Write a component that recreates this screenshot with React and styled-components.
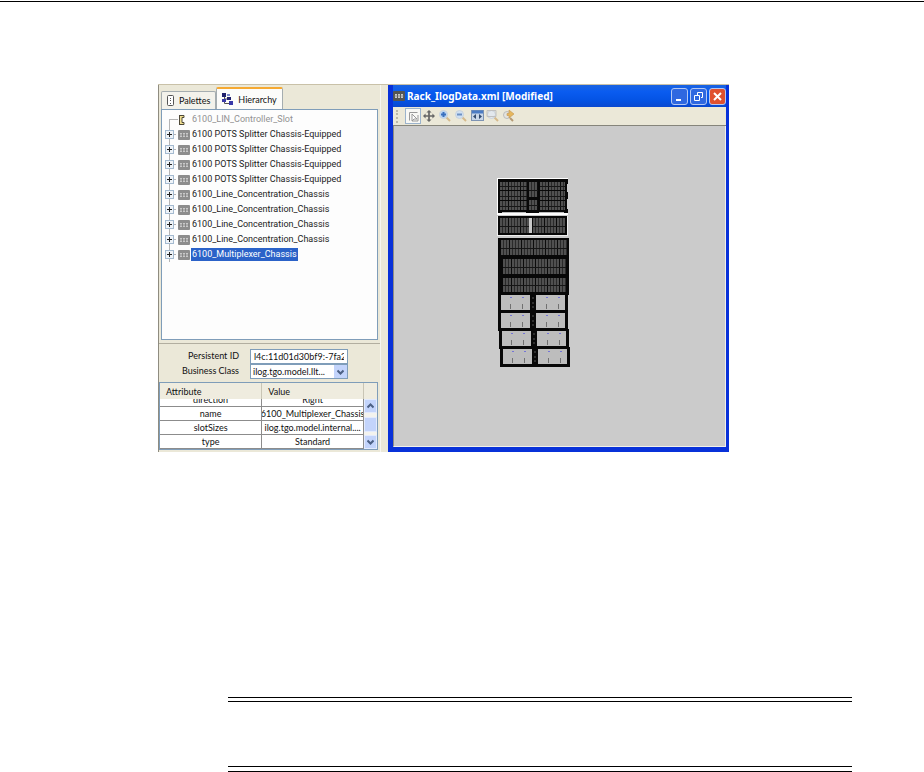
import React from 'react';
import styled, { createGlobalStyle } from 'styled-components';

const treeItems = [
  { id: 1, name: '6100 POTS Splitter Chassis-Equipped' },
  { id: 2, name: '6100 POTS Splitter Chassis-Equipped' },
  { id: 3, name: '6100 POTS Splitter Chassis-Equipped' },
  { id: 4, name: '6100 POTS Splitter Chassis-Equipped' },
  { id: 5, name: '6100_Line_Concentration_Chassis' },
  { id: 6, name: '6100_Line_Concentration_Chassis' },
  { id: 7, name: '6100_Line_Concentration_Chassis' },
  { id: 8, name: '6100_Line_Concentration_Chassis' },
  { id: 9, name: '6100_Multiplexer_Chassis', selected: true },
]

const attributes = [
  { name: 'direction', value: 'Right', clipped: true },
  { name: 'name', value: '6100_Multiplexer_Chassis' },
  { name: 'slotSizes', value: 'ilog.tgo.model.internal....' },
  { name: 'type', value: 'Standard' },
]

const range = (count) => Array.from({ length: count }, (_, i) => i)

const ChassisIcon = ({ color = '#8d8d8d' }) => (
  <svg width="12" height="10" viewBox="0 0 12 10" aria-hidden="true">
    <rect width="12" height="10" rx="1" fill={color} />
    <path d="M2 3h2v4H2zM5 3h2v4H5zM8 3h2v4H8z" fill="#c9c9c9" />
    <path d="M1 5h10" stroke="#777" strokeWidth=".7" />
  </svg>
)

const SlotIcon = () => (
  <svg width="12" height="10" viewBox="0 0 12 10" aria-hidden="true">
    <path d="M1 0h5v2L4 3v4l2 1v2H1z" fill="#f1df91" />
    <path d="M1.500 0v10M1 .5h5v2H4v5h2v2H1" fill="none" stroke="#4d4838" />
  </svg>
)

const PaletteIcon = () => (
  <svg width="8" height="12" viewBox="0 0 8 12" aria-hidden="true">
    <rect x=".5" y=".5" width="6" height="10" rx="1" fill="#fff" stroke="#555" />
    <path d="M3 3.500h1M3 5.500h1M3 8.500h1" stroke="#555" />
  </svg>
)

const HierarchyIcon = () => (
  <svg width="12" height="13" viewBox="0 0 12 13" aria-hidden="true">
    <path d="M2.500 2v8.500H7M3 6h3" fill="none" stroke="#555" />
    <path d="M0 0h4v4H0zM5 4h4v3H5z" fill="#20206c" />
    <path d="M0 6h4v3H0zM7 8h4v4H7z" fill="#3939a8" />
    <path d="M5 1h3v2H5z" fill="#7a87c8" />
  </svg>
)

const Magnifier = ({ fill, children }) => (
  <svg width="14" height="14" viewBox="0 0 14 14" aria-hidden="true">
    <path d="M8 8l4 4" stroke="#d6b98c" strokeWidth="2" />
    <circle cx="5.500" cy="5.500" r="4" fill={fill} stroke="#c9d2dc" />
    {children}
  </svg>
)

const tools = [
  {
    label: 'Select',
    active: true,
    icon: (
      <svg width="13" height="13" viewBox="0 0 13 13" aria-hidden="true">
        <path d="M2.500 10.500v-8h8M11 5v6H5" fill="none" stroke="#999" />
        <path d="M5 4v7l2-2h3z" fill="#fff" stroke="#999" />
      </svg>
    ),
  },
  {
    label: 'Pan',
    icon: (
      <svg width="12" height="12" viewBox="0 0 14 14" aria-hidden="true">
        <path d="M7 2v10M2 7h10" stroke="#666" strokeWidth="2" />
        <path d="M7 0l3 3H4zM7 14l3-3H4zM0 7l3-3v6zM14 7l-3-3v6z" fill="#666" />
      </svg>
    ),
  },
  {
    label: 'Zoom in',
    icon: <Magnifier fill="#b9d5f4"><path d="M5.500 3v5M3 5.500h5" stroke="#3b70bd" strokeWidth="2" /></Magnifier>,
  },
  {
    label: 'Zoom out',
    icon: <Magnifier fill="#cfe0f3"><path d="M3 5.500h5" stroke="#6d91c2" strokeWidth="2" /></Magnifier>,
  },
  {
    label: 'Fit to contents',
    icon: (
      <svg width="13" height="12" viewBox="0 0 13 12" aria-hidden="true">
        <rect x=".5" y=".5" width="12" height="10" fill="#c8d6e8" stroke="#7d93b3" />
        <path d="M1 2h11" stroke="#4c7cc4" strokeWidth="3" />
        <path d="M5 4v5L2 6.500zM8 4v5l3-2.500z" fill="#324b70" />
      </svg>
    ),
  },
  {
    label: 'Zoom to area',
    icon: <Magnifier fill="#e3e8ed"><path d="M1 1.500h9v6H1z" fill="none" stroke="#c0c0c0" /></Magnifier>,
  },
  {
    label: 'Edit view',
    icon: (
      <svg width="14" height="14" viewBox="0 0 14 14" aria-hidden="true">
        <circle cx="5" cy="6" r="3.500" fill="#e4e4df" stroke="#bbb" />
        <path d="M7 1l5 4-5 4V6.500H5v-2h2z" fill="#e6b75d" stroke="#c39650" strokeWidth=".6" />
        <path d="M8 9l3 3" stroke="#b59a75" strokeWidth="2" />
      </svg>
    ),
  },
]

const Chevron = ({ up }) => (
  <svg width="7" height="6" viewBox="0 0 7 6" aria-hidden="true">
    <path d={up ? 'M.5 4.500l3-3 3 3' : 'M.5 1.500l3 3 3-3'} fill="none" stroke="#4d6185" strokeWidth="2" />
  </svg>
)

const Cards = ({ x, y, width, height }) => (
  <g>
    <rect x={x} y={y} width={width} height={height} fill="#505050" />
    {range(Math.floor(width / 3)).map((i) => (
      <path key={i} d={`M${x + 2.5 + i * 3} ${y}v${height}`} stroke={i % 4 === 2 ? '#0c0c0c' : '#2a2a2a'} />
    ))}
    <path d={`M${x} ${y + Math.round(height / 2) + 0.5}h${width}`} stroke="#161616" />
  </g>
)

const Shelf = ({ x, y }) => (
  <g>
    <rect x={x} y={y} width="70" height="20" fill="#080808" />
    <path d={`M${x + 3} ${y + 2}h29v15h-29zM${x + 38} ${y + 2}h29v15h-29z`} fill="#bdbdbd" />
    <path d={`M${x + 34} ${y + 5}h2M${x + 34} ${y + 10}h2M${x + 34} ${y + 14}h2`} stroke="#555" />
    {[12, 24, 48, 60].map((dx) => (
      <g key={dx}>
        <path d={`M${x + dx} ${y + 4.5}h2`} stroke="#7474d8" />
        <path d={`M${x + dx + 0.5} ${y + 11}v5`} stroke="#717171" />
      </g>
    ))}
  </g>
)

const RackDrawing = () => (
  <svg width="75" height="190" viewBox="12 7 75 190" role="img" aria-label="Rack">
    <rect x="12" y="8" width="71" height="37" fill="#fff" />
    <rect x="13" y="9" width="70" height="34" fill="#080808" />
    <Cards x={15} y={12} width={27} height={8} />
    <Cards x={15} y={21} width={27} height={9} />
    <Cards x={15} y={31} width={27} height={9} />
    <Cards x={44} y={12} width={9} height={15} />
    <Cards x={44} y={30} width={9} height={10} />
    <Cards x={55} y={12} width={25} height={8} />
    <Cards x={55} y={21} width={25} height={9} />
    <Cards x={55} y={31} width={25} height={9} />
    <path d="M17 42.500h24M54 42.500h25" stroke="#bbb" />
    <path d="M82.500 14v8M82.500 29v10" stroke="#ccc" />

    <rect x="12" y="46" width="71" height="20" fill="#eee" />
    <rect x="13" y="46" width="69" height="19" fill="#080808" />
    <Cards x={15} y={48} width={65} height={15} />
    <rect x="44" y="48" width="3" height="15" fill="#c9c9c9" />

    <rect x="13" y="68" width="71" height="57" fill="#080808" />
    <Cards x={16} y={70} width={66} height={15} />
    <Cards x={18} y={89} width={63} height={15} />
    <Cards x={18} y={108} width={63} height={14} />

    <Shelf x={13} y={123} />
    <Shelf x={13} y={141} />
    <Shelf x={14} y={159} />
    <Shelf x={15} y={177} />
  </svg>
)

export default function App() {
  return (
    <Page>
      <GlobalStyle />
      <PageRule />
      <Editor>
        <SidePanel>
          <Tabs role="tablist">
            <Tab role="tab" aria-selected="false"><PaletteIcon />Palettes</Tab>
            <Tab role="tab" aria-selected="true" $active><HierarchyIcon />Hierarchy</Tab>
          </Tabs>
          <Tree>
            <TreeRow>
              <Elbow />
              <SlotIcon />
              <TreeLabel $muted>6100_LIN_Controller_Slot</TreeLabel>
            </TreeRow>
            {treeItems.map((item) => (
              <TreeRow key={item.id}>
                <Branch>
                  <Expander aria-label={`Expand ${item.name}`}>
                    <svg width="5" height="5" viewBox="0 0 5 5"><path d="M0 2.500h5M2.500 0v5" stroke="#222" /></svg>
                  </Expander>
                </Branch>
                <ChassisIcon />
                <TreeLabel $selected={item.selected}>{item.name}</TreeLabel>
              </TreeRow>
            ))}
          </Tree>

          <Form>
            <label htmlFor="persistent-id">Persistent ID</label>
            <TextInput id="persistent-id" defaultValue="l4c:11d01d30bf9:-7fa2" />
            <label htmlFor="business-class">Business Class</label>
            <SelectBox>
              <Select id="business-class">
                <option>ilog.tgo.model.Ilt...</option>
              </Select>
              <SelectArrow><Chevron /></SelectArrow>
            </SelectBox>
          </Form>

          <AttributePane>
            <AttributeTable>
              <thead>
                <tr><HeadCell>Attribute</HeadCell><HeadCell>Value</HeadCell></tr>
              </thead>
              <tbody>
                {attributes.map((row) => (
                  <tr key={row.name}>
                    <Cell><CellText $clipped={row.clipped}>{row.name}</CellText></Cell>
                    <Cell><CellText $clipped={row.clipped}>{row.value}</CellText></Cell>
                  </tr>
                ))}
              </tbody>
            </AttributeTable>
            <Scrollbar>
              <ScrollButton aria-label="Scroll up"><Chevron up /></ScrollButton>
              <ScrollThumb />
              <ScrollButton aria-label="Scroll down"><Chevron /></ScrollButton>
            </Scrollbar>
          </AttributePane>
        </SidePanel>

        <Window>
          <TitleBar>
            <ChassisIcon color="#555" />
            <Title>Rack_IlogData.xml [Modified]</Title>
            <WindowButton aria-label="Minimize">
              <svg width="11" height="11" viewBox="0 0 11 11"><path d="M2 9h5" stroke="#fff" strokeWidth="2" /></svg>
            </WindowButton>
            <WindowButton aria-label="Restore">
              <svg width="11" height="11" viewBox="0 0 11 11"><path d="M4.500 4V1.500h5v5H8M1.500 4.500h5v5h-5z" fill="none" stroke="#fff" /></svg>
            </WindowButton>
            <WindowButton aria-label="Close" $close>
              <svg width="11" height="11" viewBox="0 0 11 11"><path d="M2 2l7 7M9 2L2 9" stroke="#fff" strokeWidth="2" /></svg>
            </WindowButton>
          </TitleBar>
          <Toolbar>
            <Grip />
            {tools.map((tool) => (
              <ToolButton key={tool.label} aria-label={tool.label} $active={tool.active}>{tool.icon}</ToolButton>
            ))}
          </Toolbar>
          <Canvas>
            <RackNode><RackDrawing /></RackNode>
          </Canvas>
        </Window>
      </Editor>
      <Note />
    </Page>
  )
}

const GlobalStyle = createGlobalStyle`
  *, *::before {
    box-sizing: border-box;
  }
  body {
    margin: 0;
    background: #fff;
  }
  button, input, select {
    font: inherit;
    color: inherit;
    margin: 0;
    padding: 0;
    border-radius: 0;
  }
`;
const Page = styled.div`
  padding-top: 1px;
  font: 9px/13px Lato, sans-serif;
  color: #111;
`;
const PageRule = styled.hr`
  height: 1px;
  margin: 0;
  border: 0;
  background: #000;
`;
const Editor = styled.main`
  display: grid;
  grid-template-columns: 223px minmax(0, 1fr);
  column-gap: 7px;
  margin: 82px 195px 0 158px;
  border-top: 1px solid #c9c1a8;
  background: #ebe8d8;
`;
const SidePanel = styled.section`
  display: flex;
  flex-direction: column;
  border-left: 1px solid #8f8c80;
  border-right: 1px solid #f8f7f1;
`;
const Tabs = styled.div`
  display: flex;
  align-items: flex-end;
  height: 24px;
  padding: 2px 2px 0;
`;
const Tab = styled.button`
  display: flex;
  align-items: center;
  gap: 4px;
  height: ${(props) => (props.$active ? 22 : 18)}px;
  padding: 0 5px;
  border: 1px solid #a5adb0;
  border-bottom: 0;
  border-top: ${(props) => (props.$active ? '2px solid #f6a932' : '1px solid #a5adb0')};
  border-radius: 2px 2px 0 0;
  background: ${(props) => (props.$active ? '#fcfcfa' : '#f3f2eb')};
`;
const Tree = styled.div`
  height: 231px;
  margin: 0 2px 3px;
  padding: 2px 3px;
  border: 1px solid #7f9db9;
  background: #fdfdfd;
`;
const TreeRow = styled.div`
  display: flex;
  align-items: center;
  height: 15px;

  > svg {
    flex: none;
  }
`;
const Elbow = styled.span`
  align-self: flex-end;
  width: 9px;
  height: 8px;
  margin-left: 4px;
  border-left: 1px solid #b5b5b5;
  border-top: 1px solid #b5b5b5;
`;
const Branch = styled.span`
  display: flex;
  align-items: center;
  width: 13px;
  height: 15px;
  background:
    linear-gradient(#b5b5b5, #b5b5b5) 4px 0 / 1px 15px no-repeat,
    linear-gradient(#b5b5b5, #b5b5b5) 4px 7px / 7px 1px no-repeat;
`;
const Expander = styled.button`
  display: flex;
  align-items: center;
  justify-content: center;
  width: 9px;
  height: 9px;
  border: 1px solid #a4bad0;
  background: #eef3f8;
`;
const TreeLabel = styled.span`
  padding: 0 1px;
  margin-left: 1px;
  font-family: Roboto, sans-serif;
  line-height: 13px;
  white-space: nowrap;
  color: ${(props) => (props.$selected ? '#fff' : props.$muted ? '#929292' : '#222')};
  background: ${(props) => (props.$selected ? '#2b62c8' : 'none')};
`;
const Form = styled.form`
  display: grid;
  grid-template-columns: 80px 98px;
  grid-auto-rows: 15px;
  column-gap: 11px;
  padding: 5px 0 3px;
  border-top: 1px solid #b2aea0;
  text-align: right;
`;
const TextInput = styled.input`
  width: 100%;
  padding: 0 3px;
  border: 1px solid #7f9db9;
  background: #fff;
`;
const SelectBox = styled.div`
  position: relative;
  display: flex;
`;
const Select = styled.select`
  width: 100%;
  padding: 0 2px;
  border: 1px solid #7f9db9;
  background: #fff;
  appearance: none;
`;
const SelectArrow = styled.span`
  position: absolute;
  top: 1px;
  right: 1px;
  bottom: 1px;
  display: flex;
  align-items: center;
  justify-content: center;
  width: 13px;
  background: #c3d4fb;
  pointer-events: none;
`;
const AttributePane = styled.div`
  display: flex;
  margin: 0 2px 2px 0;
  border: 1px solid #7f9db9;
`;
const AttributeTable = styled.table`
  flex: 1;
  width: 100%;
  min-width: 0;
  table-layout: fixed;
  border-collapse: collapse;
  background: #fff;
`;
const HeadCell = styled.th`
  width: 50%;
  height: 16px;
  padding: 0 6px;
  border-right: 1px solid #c9c5b5;
  background: #efecdf;
  font-weight: normal;
  text-align: left;
`;
const Cell = styled.td`
  padding: 0;
  border-right: 1px solid #8c8c8c;
  border-bottom: 1px solid #8c8c8c;
  text-align: center;
`;
const CellText = styled.div`
  display: flex;
  align-items: flex-end;
  justify-content: center;
  height: ${(props) => (props.$clipped ? 7 : 13)}px;
  overflow: hidden;
  line-height: 13px;
  white-space: nowrap;
`;
const Scrollbar = styled.div`
  display: flex;
  flex: none;
  flex-direction: column;
  justify-content: space-between;
  width: 13px;
  border-top: 16px solid #efecdf;
  background: #f3f3ee;
`;
const ScrollButton = styled.button`
  display: flex;
  align-items: center;
  justify-content: center;
  width: 13px;
  height: 14px;
  border: 1px solid #e3ebfd;
  background: #c3d4fb;
`;
const ScrollThumb = styled.div`
  height: 15px;
  border: 1px solid #e3ebfd;
  background: #c3d4fb;
`;
const Window = styled.section`
  display: flex;
  flex-direction: column;
  min-width: 0;
  border: solid #0831d9;
  border-width: 0 3px 5px 5px;
  background: #ebe8d8;
`;
const TitleBar = styled.header`
  display: flex;
  align-items: center;
  gap: 2px;
  height: 22px;
  background: linear-gradient(#1b63e0, #0a5cf0 30%, #0453e4 70%, #0a48cf);
`;
const Title = styled.h1`
  flex: 1;
  margin: 0;
  color: #fff;
  font: bold 10px/20px "Noto Sans", sans-serif;
  white-space: nowrap;
`;
const WindowButton = styled.button`
  display: flex;
  align-items: center;
  justify-content: center;
  width: 17px;
  height: 17px;
  border: 1px solid #b4c8f4;
  border-radius: 3px;
  background: ${(props) => (props.$close ? '#e0512f' : '#2f68e0')};
`;
const Toolbar = styled.div`
  display: flex;
  align-items: center;
  height: 19px;
  padding-left: 2px;
  border-bottom: 1px solid #86857b;
`;
const Grip = styled.span`
  height: 13px;
  margin: 0 7px 0 1px;
  border-left: 2px dotted #bbb8a9;
`;
const ToolButton = styled.button`
  display: flex;
  align-items: center;
  justify-content: center;
  width: 16px;
  height: 16px;
  border: ${(props) => (props.$active ? '1px solid #9bb3cc' : '0')};
  background: ${(props) => (props.$active ? '#f8f8f5' : 'none')};
`;
const Canvas = styled.div`
  position: relative;
  flex: 1;
  border: solid #f1f0ea;
  border-width: 0 1px 1px 0;
  border-left: 1px solid #8f8d84;
  background: #cbcbcb;
`;
const RackNode = styled.div`
  position: absolute;
  left: 103px;
  top: 51px;
  display: flex;
`;
const Note = styled.aside`
  height: 75px;
  margin: 245px 72px 0 228px;
  border: solid #000;
  border-width: 1px 0;
  padding: 3px 0 4px;

  &::before {
    content: "";
    display: block;
    height: 66px;
    border: solid #000;
    border-width: 1px 0;
  }
`;
